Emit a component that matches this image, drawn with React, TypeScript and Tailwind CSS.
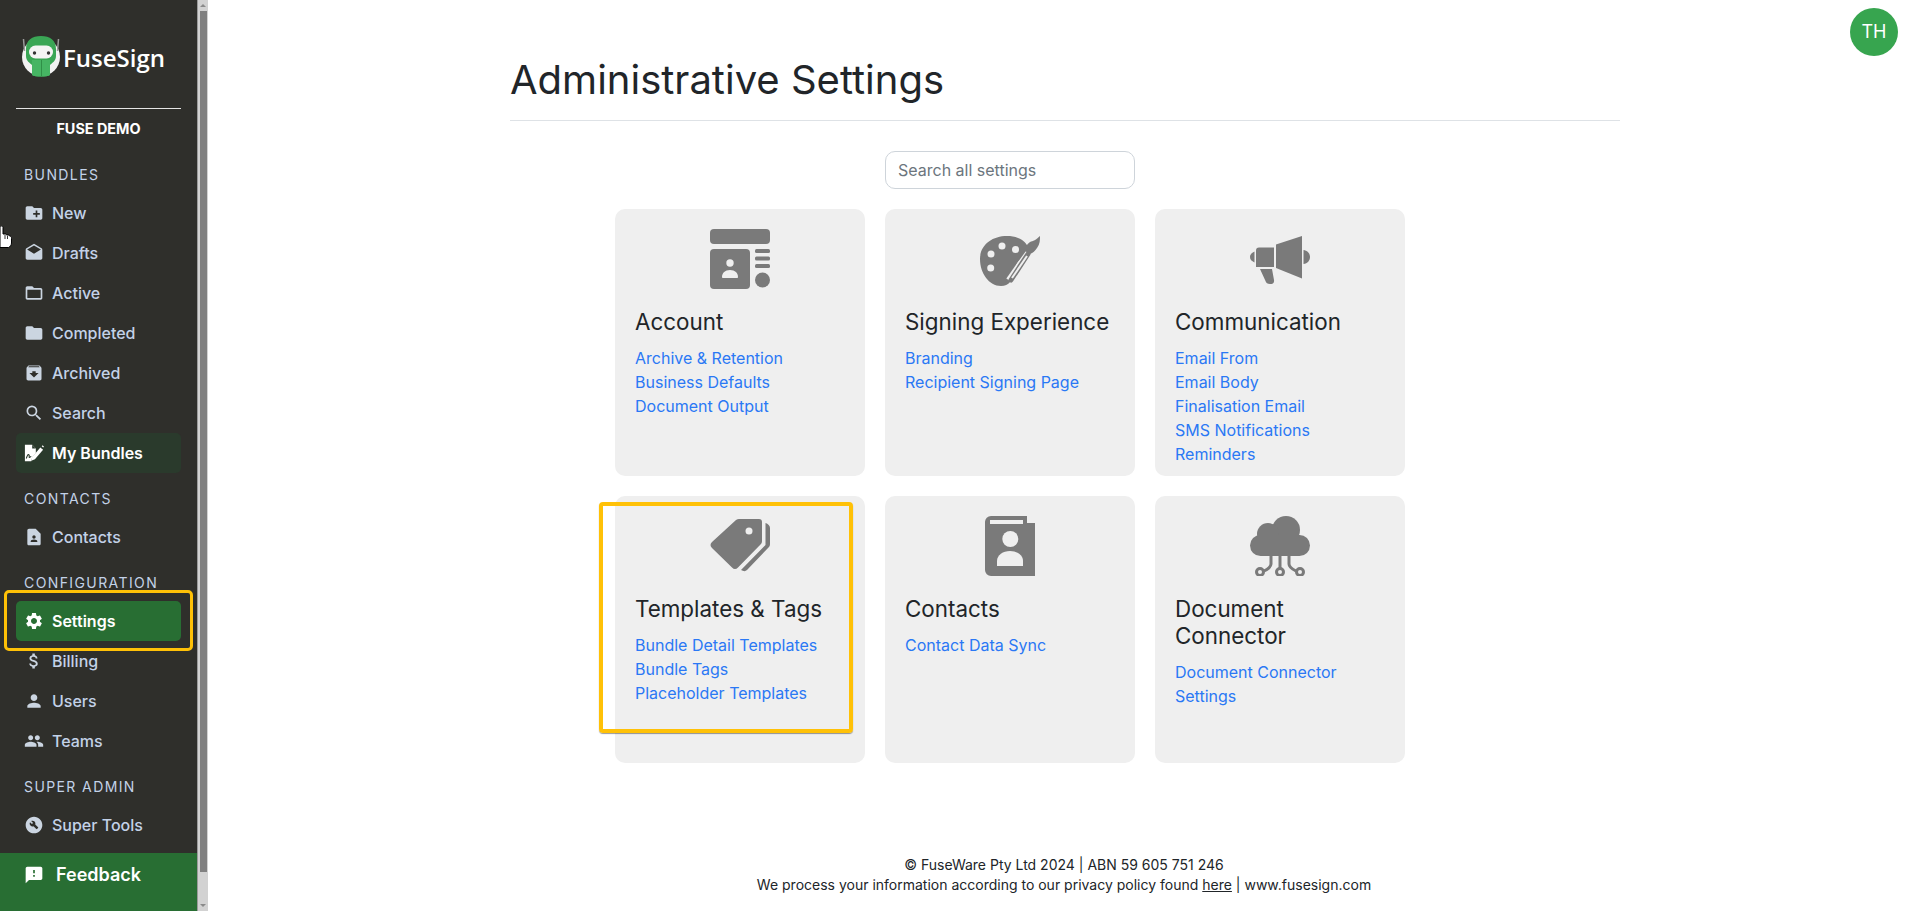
import type { ReactNode } from 'react';
import {
  MdCreateNewFolder,
  MdDrafts,
  MdFolderOpen,
  MdFolder,
  MdArchive,
  MdSearch,
  MdContactPage,
  MdSettings,
  MdAttachMoney,
  MdPerson,
  MdPeople,
  MdBuildCircle,
  MdFeedback,
} from 'react-icons/md';

const inter = { fontFamily: 'Inter, sans-serif' };

function BundlesIcon() {
  return (
    <svg viewBox="0 0 22 20" className="h-5 w-[22px]">
      <path d="M1 1h8l4 4v5l-4 5-1 4H1z" fill="#fff" />
      <path d="M9 1l4 4H9z" fill="#2a3a2c" />
      <path d="M2.500 16c1-3 2-5 3-4s-.5 3 .5 3 1-1.500 2-1" fill="none" stroke="#2a3a2c" strokeWidth="1.200" />
      <path d="M18 4l3 2.500-9 10.500-4 1.500 1-4z" fill="#fff" />
      <path d="M19.500 2.500l1-1 1.500 1.500-1 1z" fill="#fff" />
    </svg>
  );
}

function Logo() {
  return (
    <svg viewBox="0 0 38 41" className="h-[41px] w-[38px]">
      <circle cx="19" cy="21" r="19" fill="#f2f2f2" />
      <path d="M1.500 3l1 12M36.500 3l-1 12" stroke="#9a9a9a" strokeWidth="1.500" fill="none" />
      <path d="M4 13C4 4 10 0 19 0s15 4 15 13v7c0 5-4 7-6 9v10c-3 2-15 2-18 0V29c-2-2-6-4-6-9z" fill="#3aa655" />
      <path d="M10 24h18v15c-3 2-15 2-18 0z" fill="#46b563" />
      <path d="M19.500 24v16" stroke="#2f8f47" strokeWidth="1" />
      <rect x="7" y="9.500" width="24" height="13" rx="6.500" fill="#f4f4f4" />
      <circle cx="12.500" cy="17" r="1.700" fill="#333" />
      <circle cx="26.500" cy="17" r="1.700" fill="#333" />
    </svg>
  );
}

function AccountIcon() {
  return (
    <svg viewBox="0 0 60 60" className="h-[60px] w-[60px]" fill="#7a7a7a">
      <rect width="60" height="15" rx="4" />
      <rect y="20" width="40" height="40" rx="4" />
      <rect x="45" y="20" width="15" height="4" rx="1.500" />
      <rect x="45" y="27.500" width="15" height="4" rx="1.500" />
      <rect x="45" y="35" width="15" height="4" rx="1.500" />
      <circle cx="52.500" cy="51" r="7.500" />
      <circle cx="20" cy="34" r="3.700" fill="#efefef" />
      <path d="M12 48c0-4 3-7 8-7s8 3 8 7c0 .6-.5 1-1 1H13c-.5 0-1-.4-1-1z" fill="#efefef" />
    </svg>
  );
}

function PaletteIcon() {
  return (
    <svg viewBox="0 0 60 60" className="h-[60px] w-[60px]">
      <path d="M27 7c10 0 18 4 21 11 2 6-2 8-6 11-5 4-7 8-8 14-1 8-5 14-13 14C9 57 0 44 0 30 0 16 12 7 27 7z" fill="#7a7a7a" />
      <path d="M30 52L50 24" stroke="#efefef" strokeWidth="9" />
      <circle cx="11" cy="25" r="3.500" fill="#efefef" />
      <circle cx="22" cy="17" r="3.500" fill="#efefef" />
      <circle cx="35.500" cy="20.500" r="3.500" fill="#efefef" />
      <circle cx="10.700" cy="39" r="3.500" fill="#efefef" />
      <path d="M31 51L48 25" stroke="#7a7a7a" strokeWidth="5" strokeLinecap="round" />
      <path d="M32 49L47 27" stroke="#efefef" strokeWidth="2" />
      <path d="M60 7c0 4 0 8-3 12-2 3-4 5-7 6l-5-3c0-4 2-7 5-9 3-1 6-2 10-6z" fill="#7a7a7a" />
    </svg>
  );
}

function MegaphoneIcon() {
  return (
    <svg viewBox="0 0 60 60" className="h-[60px] w-[60px]" fill="#7a7a7a">
      <path d="M26 15.500L52 7v42.500L26 39z" />
      <path d="M9 18.500h15V38H6V21.500a3 3 0 0 1 3-3z" />
      <path d="M4.500 22.500v11C1.500 32 0 30.500 0 28s1.500-4 4.500-5.500z" />
      <path d="M53.500 21c4 .5 6.500 3.500 6.500 7s-2.500 6.500-6.500 7z" />
      <path d="M10 40h12l2 11c.5 3-1.500 4-4 4s-4-1-4.500-3z" />
    </svg>
  );
}

function TagsIcon() {
  return (
    <svg viewBox="0 0 60 60" className="h-[60px] w-[60px]">
      <path
        d="M29 3h20a3 3 0 0 1 3 3v19c0 1.500-.5 2.500-1.500 3.500L28 51.500c-2 2-4 2-6 0L2 32c-2-2-2-4 0-6L26 4c1-.7 2-1 3-1z"
        fill="#7a7a7a"
      />
      <circle cx="39" cy="15" r="3.500" fill="#efefef" />
      <path d="M55.500 7c2.500 1 4.500 2.500 4.500 5v16c0 1.500-.5 2.500-1.500 3.500L37 54c-1.500 1.500-3.500 1.500-6 0l24.500-25z" fill="#7a7a7a" />
    </svg>
  );
}

function ContactBookIcon() {
  return (
    <svg viewBox="0 0 60 60" className="h-[60px] w-[60px]">
      <path d="M11 0h36v7h8v53H11a6 6 0 0 1-6-6V6a6 6 0 0 1 6-6z" fill="#7a7a7a" />
      <rect x="10" y="4" width="33" height="4" fill="#efefef" />
      <circle cx="30.300" cy="23" r="8" fill="#efefef" />
      <path d="M17 50v-5c0-6 6-10 13-10s13 4 13 10v5z" fill="#efefef" />
    </svg>
  );
}

function CloudIcon() {
  return (
    <svg viewBox="0 0 60 60" className="h-[60px] w-[60px]">
      <g fill="#7a7a7a">
        <circle cx="36" cy="14" r="14" />
        <circle cx="18" cy="18" r="11" />
        <rect y="19" width="60" height="21" rx="10.500" />
      </g>
      <g fill="none" stroke="#7a7a7a" strokeWidth="3">
        <path d="M30 38v14" />
        <path d="M21 38v10c0 3-3 5-7 7" />
        <path d="M39 38v10c0 3 3 5 7 7" />
        <circle cx="10" cy="56" r="3.500" />
        <circle cx="30" cy="56" r="3.500" />
        <circle cx="50" cy="56" r="3.500" />
      </g>
    </svg>
  );
}

function HandCursor() {
  return (
    <svg viewBox="0 0 12 22" className="absolute left-0 top-[226px] h-[22px] w-3">
      <path
        d="M0 0h1.500c1 0 1.500.7 1.500 1.500V8l2 0c1 0 1.500.5 1.500 1l1.500 0c1 0 1.500.5 1.500 1l1 .3c1 .3 1 1 1 2V17c0 2-1.500 4-3 4.500H0z"
        fill="#fff"
        stroke="#000"
        strokeWidth="1"
      />
      <path d="M5 9v4M7.500 10v3" stroke="#000" strokeWidth="0.800" fill="none" />
    </svg>
  );
}

function NavItem({ icon, label, active, tint }: { icon: ReactNode; label: string; active?: boolean; tint?: string }) {
  const base = 'flex h-10 mx-4 items-center gap-[8px] rounded-[5px] pl-2 text-base';
  if (active) {
    return (
      <div className={`${base} font-semibold text-white ${tint}`}>
        <span className="flex w-5 justify-center">{icon}</span>
        {label}
      </div>
    );
  }
  return (
    <div className={`${base} font-medium text-[#c3d2e8]`}>
      <span className="flex w-5 justify-center text-[#cbd5e1]">{icon}</span>
      {label}
    </div>
  );
}

function Heading({ children, first }: { children: ReactNode; first?: boolean }) {
  return (
    <div className={`${first ? 'mt-[26px]' : 'mt-4'} mb-2 h-5 pl-6 text-sm leading-5 tracking-[1.400px] text-[#c3d2e8]`}>
      {children}
    </div>
  );
}

function Sidebar() {
  const ic = 'h-5 w-5';
  return (
    <aside className="relative flex h-full w-[197px] shrink-0 flex-col bg-[#2f2f2b]">
      <div className="mt-9 flex h-[41px] items-center pl-[22px]">
        <Logo />
        <span className="ml-[3px] mt-[2px] text-2xl font-semibold text-white" style={{ fontFamily: '"Open Sans", sans-serif' }}>
          FuseSign
        </span>
      </div>
      <div className="mx-4 mt-[31px] h-px bg-[#e5e5e5]" />
      <div className="mt-[10px] text-center text-[14.400px] font-bold leading-5 text-white">FUSE DEMO</div>

      <Heading first>BUNDLES</Heading>
      <NavItem icon={<MdCreateNewFolder className={ic} />} label="New" />
      <NavItem icon={<MdDrafts className={ic} />} label="Drafts" />
      <NavItem icon={<MdFolderOpen className={ic} />} label="Active" />
      <NavItem icon={<MdFolder className={ic} />} label="Completed" />
      <NavItem icon={<MdArchive className={ic} />} label="Archived" />
      <NavItem icon={<MdSearch className={ic} />} label="Search" />
      <NavItem icon={<BundlesIcon />} label="My Bundles" active tint="bg-[#2a3a2c]" />

      <Heading>CONTACTS</Heading>
      <NavItem icon={<MdContactPage className={ic} />} label="Contacts" />

      <Heading>CONFIGURATION</Heading>
      <div className="relative">
        <NavItem icon={<MdSettings className={ic} />} label="Settings" active tint="bg-[#286e33]" />
        <div className="absolute -top-[11px] left-1 h-[61px] w-[189px] rounded-[5px] border-[3px] border-[#ffc107]" />
      </div>
      <NavItem icon={<MdAttachMoney className={ic} />} label="Billing" />
      <NavItem icon={<MdPerson className={ic} />} label="Users" />
      <NavItem icon={<MdPeople className={ic} />} label="Teams" />

      <Heading>SUPER ADMIN</Heading>
      <NavItem icon={<MdBuildCircle className={ic} />} label="Super Tools" />

      <div className="mt-auto flex h-[58px] items-start bg-[#286e33] pl-6 pt-[10px] text-white">
        <MdFeedback className="mt-[2px] h-5 w-5" />
        <span className="ml-3 text-lg font-semibold leading-6">Feedback</span>
      </div>
      <HandCursor />
    </aside>
  );
}

function Scrollbar() {
  return (
    <div className="flex h-full w-[11px] shrink-0 flex-col items-center border-l border-[#9a9a9a] bg-[#d2d2d2]">
      <div className="mt-1 h-0 w-0 border-x-[3px] border-b-[3px] border-x-transparent border-b-[#8a8a8a]" />
      <div className="mt-1 h-[861px] w-[7px] bg-[#808080]" />
      <div className="mt-auto mb-[4px] h-0 w-0 border-x-[3px] border-t-[3px] border-x-transparent border-t-[#8a8a8a]" />
    </div>
  );
}

type CardData = { title: ReactNode; icon: ReactNode; links: string[]; highlight?: boolean };

const cards: CardData[] = [
  { title: 'Account', icon: <AccountIcon />, links: ['Archive & Retention', 'Business Defaults', 'Document Output'] },
  { title: 'Signing Experience', icon: <PaletteIcon />, links: ['Branding', 'Recipient Signing Page'] },
  {
    title: 'Communication',
    icon: <MegaphoneIcon />,
    links: ['Email From', 'Email Body', 'Finalisation Email', 'SMS Notifications', 'Reminders'],
  },
  {
    title: 'Templates & Tags',
    icon: <TagsIcon />,
    links: ['Bundle Detail Templates', 'Bundle Tags', 'Placeholder Templates'],
    highlight: true,
  },
  { title: 'Contacts', icon: <ContactBookIcon />, links: ['Contact Data Sync'] },
  { title: 'Document Connector', icon: <CloudIcon />, links: ['Document Connector Settings'] },
];

function SettingsCard({ card }: { card: CardData }) {
  return (
    <div className="relative h-[267px] rounded-[10px] bg-[#efefef] px-5 pt-5">
      <div className="flex justify-center">{card.icon}</div>
      <h4 className="mt-[19px] text-[22.400px] font-normal leading-[27px] text-[#212529]">{card.title}</h4>
      <div className="mt-[11px] flex flex-col text-base leading-6 text-[#2a78f5]">
        {card.links.map((l) => (
          <a key={l}>{l}</a>
        ))}
      </div>
      {card.highlight && (
        <div className="absolute -left-4 top-[6px] h-[231px] w-[254px] rounded-[4px] border-[4px] border-[#ffc107] shadow-[0_1px_1px_rgba(0,0,0,0.4)]" />
      )}
    </div>
  );
}

function Main() {
  return (
    <main className="relative h-full flex-1 overflow-hidden bg-white text-[#212529]">
      <div className="absolute right-[22px] top-2 flex h-12 w-12 items-center justify-center rounded-full bg-[#37a54f] text-lg text-white">
        TH
      </div>
      <div className="ml-[302px] w-[1110px] pt-14">
        <h1 className="text-[40px] font-normal leading-12">Administrative Settings</h1>
        <div className="mt-4 h-px bg-[#dee2e6]" />
        <div className="w-[1000px]">
          <div className="mx-auto mt-[30px] flex h-[38px] w-[250px] items-center rounded-[10px] border border-[#ced4da] px-3 text-base text-[#6c757d]">
            Search all settings
          </div>
          <div className="mx-auto mt-5 grid w-[790px] grid-cols-3 gap-5">
            {cards.map((c, i) => (
              <SettingsCard key={i} card={c} />
            ))}
          </div>
        </div>
      </div>
      <div className="mt-[92px] text-center text-sm leading-5">
        <div>© FuseWare Pty Ltd 2024 | ABN 59 605 751 246</div>
        <div>
          We process your information according to our privacy policy found <span className="underline">here</span> | www.fusesign.com
        </div>
      </div>
    </main>
  );
}

export default function App() {
  return (
    <div className="flex h-[911px] w-full overflow-hidden" style={inter}>
      <Sidebar />
      <Scrollbar />
      <Main />
    </div>
  );
}
